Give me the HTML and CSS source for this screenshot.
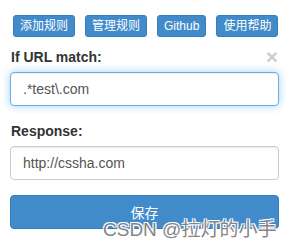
FILE: index.html
```html
<!DOCTYPE html>
<html lang="zh-CN">
<head>
    <meta charset="UTF-8">
    <meta name="viewport" content="width=device-width, initial-scale=1.0">
    <title>URL Rule Editor</title>
    <link rel="stylesheet" href="styles.css">
</head>
<body>

    <div class="panel">
        <!-- Top menu buttons -->
        <div class="menu">
            <button class="btn-mini">添加规则</button>
            <button class="btn-mini">管理规则</button>
            <button class="btn-mini">Github</button>
            <button class="btn-mini">使用帮助</button>
        </div>

        <!-- Rule form -->
        <form class="rule-form">
            <div class="form-group">
                <div class="label-row">
                    <label for="urlMatch">If URL match:</label>
                    <span class="close">&times;</span>
                </div>
                <input type="text" id="urlMatch" class="form-control focused" value=".*test\.com">
            </div>
            <div class="form-group">
                <div class="label-row">
                    <label for="response">Response:</label>
                </div>
                <input type="text" id="response" class="form-control" value="http://cssha.com">
            </div>
            <button type="button" class="btn-save">保存</button>
        </form>
    </div>

    <div class="watermark">CSDN @拉灯的小手</div>

</body>
</html>
```

FILE: styles.css
```css
/* Base */
html, body {
    margin: 0;
    padding: 0;
    background: #fff;
}
body {
    font-family: "Liberation Sans", Arial, "Noto Sans CJK SC", sans-serif;
    font-size: 14px;
    color: #333;
    position: relative;
    width: 290px;
    height: 249px;
    overflow: hidden;
}
.panel {
    padding: 15px 11px 0 10px;
}

/* Menu buttons */
.menu {
    display: flex;
    gap: 10px;
    padding-left: 3px;
    margin-bottom: 10px;
}
.btn-mini {
    font-family: "Liberation Sans", Arial, "Noto Sans CJK SC", sans-serif;
    font-size: 12px;
    line-height: 20px;
    height: 22px;
    padding: 0 6px;
    color: #fff;
    background-color: #428bca;
    border: 1px solid #357ebd;
    border-radius: 3px;
    cursor: pointer;
}

/* Form */
.form-group {
    margin-bottom: 15px;
}
.label-row {
    display: flex;
    justify-content: space-between;
    align-items: center;
    margin-bottom: 5px;
    padding-left: 1px;
}
.label-row label {
    font-weight: bold;
    line-height: 20px;
}
.close {
    font-size: 21px;
    font-weight: bold;
    line-height: 20px;
    color: #000;
    opacity: 0.2;
    margin-right: 1px;
}
.form-control {
    display: block;
    box-sizing: border-box;
    width: 100%;
    height: 34px;
    padding: 6px 12px;
    font-family: "Liberation Sans", Arial, sans-serif;
    font-size: 14px;
    color: #555;
    background: #fff;
    border: 1px solid #ccc;
    border-radius: 4px;
    box-shadow: inset 0 1px 1px rgba(0, 0, 0, 0.075);
    outline: none;
}
.form-control.focused {
    border-color: #66afe9;
    box-shadow: inset 0 1px 1px rgba(0, 0, 0, 0.075), 0 0 8px rgba(102, 175, 233, 0.6);
}
.btn-save {
    display: block;
    width: 100%;
    height: 34px;
    font-family: "Liberation Sans", Arial, "Noto Sans CJK SC", sans-serif;
    font-size: 14px;
    color: #fff;
    background-color: #428bca;
    border: 1px solid #357ebd;
    border-radius: 4px;
    cursor: pointer;
}

/* CSDN watermark over the bottom corner */
.watermark {
    position: absolute;
    left: 103px;
    top: 218px;
    font-family: "Liberation Sans", Arial, "Noto Sans CJK SC", sans-serif;
    font-size: 19px;
    line-height: 24px;
    color: #858585;
    text-shadow: 1px 1px 0 #fff, -1px -1px 0 #fff, 1px -1px 0 #fff, -1px 1px 0 #fff;
    white-space: nowrap;
}
```
